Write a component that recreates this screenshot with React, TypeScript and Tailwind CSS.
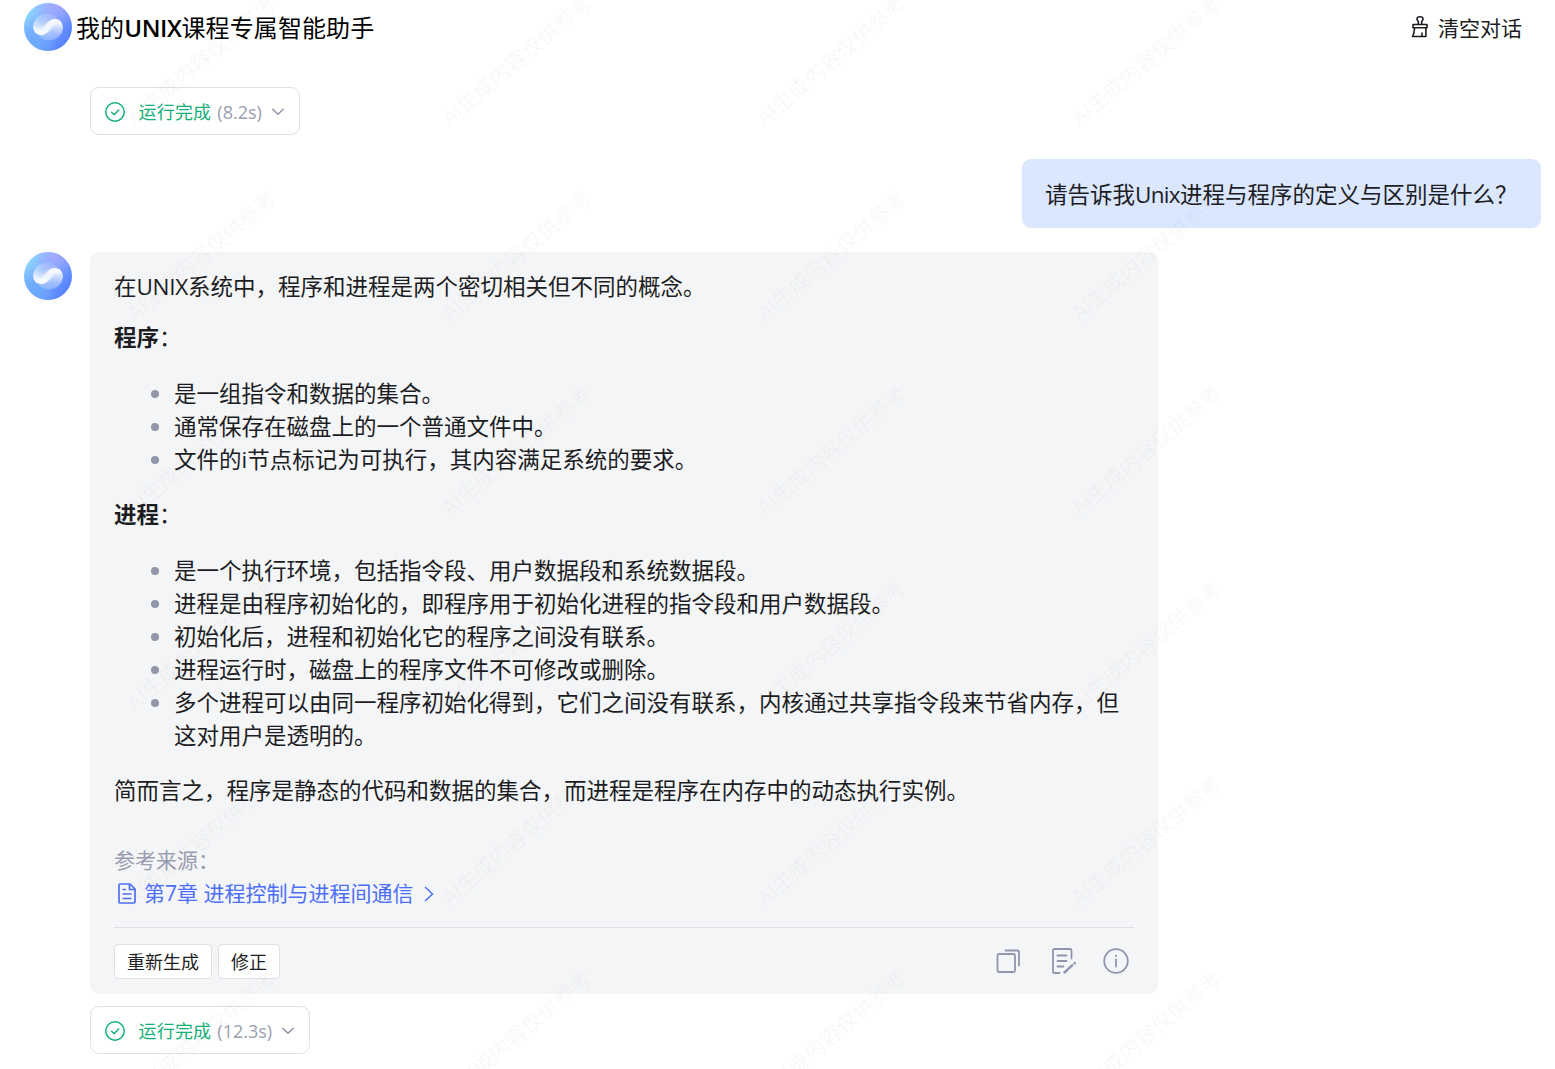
import React from "react";

const programPoints = [
  "是一组指令和数据的集合。",
  "通常保存在磁盘上的一个普通文件中。",
  "文件的i节点标记为可执行，其内容满足系统的要求。",
];

const processPoints = [
  "是一个执行环境，包括指令段、用户数据段和系统数据段。",
  "进程是由程序初始化的，即程序用于初始化进程的指令段和用户数据段。",
  "初始化后，进程和初始化它的程序之间没有联系。",
  "进程运行时，磁盘上的程序文件不可修改或删除。",
  "多个进程可以由同一程序初始化得到，它们之间没有联系，内核通过共享指令段来节省内存，但这对用户是透明的。",
];

function Avatar({ id }: { id: string }) {
  return (
    <svg viewBox="0 0 48 48" className="size-12 shrink-0">
      <defs>
        <linearGradient id={id + "-bg"} x1="0.05" y1="0.15" x2="0.9" y2="0.8">
          <stop offset="0" stopColor="#8fdcff" />
          <stop offset="0.45" stopColor="#7ea9ff" />
          <stop offset="1" stopColor="#5580ff" />
        </linearGradient>
        <radialGradient id={id + "-tint"} cx="0.65" cy="0.05" r="0.5">
          <stop offset="0" stopColor="#b0a6ff" stopOpacity="0.75" />
          <stop offset="1" stopColor="#b0a6ff" stopOpacity="0" />
        </radialGradient>
        <radialGradient id={id + "-low"} cx="0.2" cy="0.8" r="0.5">
          <stop offset="0" stopColor="#6cabff" />
          <stop offset="1" stopColor="#6cabff" stopOpacity="0" />
        </radialGradient>
        <linearGradient id={id + "-a"} x1="0.65" y1="0" x2="0.35" y2="1">
          <stop offset="0" stopColor="#fff" stopOpacity="0.12" />
          <stop offset="0.4" stopColor="#fff" stopOpacity="0.35" />
          <stop offset="0.85" stopColor="#fff" stopOpacity="0.9" />
        </linearGradient>
        <linearGradient id={id + "-b"} x1="0.65" y1="0" x2="0.35" y2="1">
          <stop offset="0.1" stopColor="#fff" stopOpacity="0.9" />
          <stop offset="0.6" stopColor="#fff" stopOpacity="0.4" />
          <stop offset="1" stopColor="#fff" stopOpacity="0.22" />
        </linearGradient>
      </defs>
      <circle cx="24" cy="24" r="24" fill={`url(#${id}-bg)`} />
      <circle cx="24" cy="24" r="24" fill={`url(#${id}-low)`} />
      <circle cx="24" cy="24" r="24" fill={`url(#${id}-tint)`} />
      <path d="M9 23A14 14 0 0 1 33 15C28 21 25 32 17 32C12 32 9 28 9 23Z" fill={`url(#${id}-a)`} />
      <path d="M39 25A14 14 0 0 1 15 33C20 27 23 16 31 16C36 16 39 20 39 25Z" fill={`url(#${id}-b)`} />
      <path d="M10 27C14 30 17 26 20 22C23 18 27 16 31 16C35 16 37 18 38 21C34 19 31 22 28 26C25 30 21 32 17 32C13.500 32 11 30 10 27Z" fill="#fff" fillOpacity="0.4" />
    </svg>
  );
}

function RunStatus({ time, className }: { time: string; className: string }) {
  return (
    <div className={`ml-[90px] flex h-12 items-center rounded-[9px] border border-[#dfe0e8] pt-px pl-[14px] text-[18px] ${className}`}>
      <svg viewBox="0 0 20 20" className="size-5" fill="none" stroke="#12b077" strokeWidth="1.500" strokeLinecap="round" strokeLinejoin="round">
        <circle cx="10" cy="10" r="9.200" />
        <path d="M6.600 10.300 9.100 12.800 13.700 8" />
      </svg>
      <span className="ml-[13.5px] pt-px tracking-[0.2px] text-[#12b077]">运行完成</span>
      <span className="ml-[6px] pt-px text-[#9a9eb0]">({time})</span>
      <svg viewBox="0 0 12 8" className="ml-[10px] h-2 w-3" fill="none" stroke="#8f93a6" strokeWidth="1.400" strokeLinecap="round" strokeLinejoin="round">
        <path d="M0.800 1.200 6 6.200 11.200 1.200" />
      </svg>
    </div>
  );
}

function Points({ items }: { items: string[] }) {
  return (
    <ul>
      {items.map((t) => (
        <li key={t} className="flex">
          <span className="mt-[13px] mr-[15px] ml-[37px] size-2 shrink-0 rounded-full bg-[#9196a8]" />
          <span>{t}</span>
        </li>
      ))}
    </ul>
  );
}

const marks = [-37, 158, 353, 548, 743, 938].flatMap((y) => [122, 437, 752, 1067].map((x) => [x, y]));

function Watermark() {
  return (
    <div className="pointer-events-none absolute inset-0 overflow-hidden">
      {marks.map(([x, y]) => (
        <div key={x + "-" + y} className="absolute flex h-[195px] w-[160px] items-center justify-center" style={{ left: x, top: y }}>
          <span className="-rotate-[40deg] text-[21px] leading-none whitespace-nowrap text-[#1c1d23]/4">AI生成内容仅供参考</span>
        </div>
      ))}
    </div>
  );
}

export default function App() {
  return (
    <div lang="zh-CN" className="relative h-[1069px] w-[1555px] overflow-hidden bg-white font-['Open_Sans','Noto_Sans_CJK_SC',sans-serif] text-[#1c1d23]">
      <header className="flex h-[54px] items-center pr-[33px] pl-6">
        <Avatar id="head" />
        <h1 className="ml-1 pt-0.5 text-[24px] leading-9 tracking-[0.1px] text-black">
          我的<span className="font-semibold tracking-[-0.4px]">UNIX</span>课程专属智能助手
        </h1>
        <button className="ml-auto flex items-center pt-px text-[21px] leading-8">
          <svg viewBox="0 0 18 22" className="mr-[9px] mb-px h-[22px] w-[18px]" fill="none" stroke="#1c1d23" strokeWidth="1.600" strokeLinejoin="round">
            <path d="M7.300 8V5.500C6.300 4.500 6 3.800 6 3a3 2.200 0 0 1 6 0c0 .8-.3 1.500-1.300 2.500V8" />
            <path d="M2 8.500h14v3.200H2zM3.600 12 2.800 17.500 1.500 20.500h13.400V12M11 20v-3.500" />
          </svg>
          <span className="pt-px">清空对话</span>
        </button>
      </header>

      <main className="flex flex-col items-start pt-[33px]">
        <RunStatus time="8.2s" className="w-[210px]" />

        <div className="mt-6 mr-[14px] flex h-[69px] w-[519px] items-center self-end rounded-[9px] bg-[#dbe6ff] pt-px pl-[23px] text-[22.500px] leading-[33px]">
          请告诉我<span className="tracking-[-0.7px]">Unix</span>进程与程序的定义与区别是什么？
        </div>

        <section className="mt-6 flex items-start pl-6">
          <Avatar id="reply" />
          <article className="ml-[18px] h-[742px] w-[1068px] rounded-[9px] bg-[#f4f5f7] px-6 pt-[18px] text-[22.500px] leading-[33px]">
            <p>在<span className="tracking-[-0.3px]">UNIX</span>系统中，程序和进程是两个密切相关但不同的概念。</p>
            <p className="mt-[18px] mb-[23px]"><b className="font-bold">程序</b>：</p>
            <Points items={programPoints} />
            <p className="mt-[22px] mb-[23px]"><b className="font-bold">进程</b>：</p>
            <Points items={processPoints} />
            <p className="mt-[22px]">简而言之，程序是静态的代码和数据的集合，而进程是程序在内存中的动态执行实例。</p>

            <div className="mt-[37px] text-[21px] leading-[33px]">
              <p className="text-[#9a9db0]">参考来源：</p>
              <a className="flex items-center pl-1 text-[#4d6ff7]">
                <svg viewBox="0 0 18 21" className="mr-2 h-[21px] w-[18px]" fill="none" stroke="currentColor" strokeWidth="1.700" strokeLinejoin="round">
                  <path d="M1 2.200Q1 1 2.200 1H12l5 5v12.800q0 1.200-1.200 1.200H2.200Q1 20 1 18.800ZM11.500 1v5.500H17M4.500 6.500H8M4.500 11h9M4.500 15.500h9" />
                </svg>
                第7章 进程控制与进程间通信
                <svg viewBox="0 0 10 16" className="ml-[11px] h-4 w-[10px]" fill="none" stroke="currentColor" strokeWidth="1.500">
                  <path d="M1 1 8.500 8 1 15" />
                </svg>
              </a>
            </div>

            <footer className="mt-[17px] flex items-center border-t border-[#dfe0e6] pt-4 text-[18px] leading-none">
              <button className="h-[35px] w-[98px] rounded-[4px] border border-[#dfe0e8] bg-white">重新生成</button>
              <button className="ml-[6px] h-[35px] w-[62px] rounded-[4px] border border-[#dfe0e8] bg-white">修正</button>
              <div className="mr-[5px] mb-px ml-auto flex items-center text-[#9196ac]">
                <svg viewBox="0 0 26 26" className="mr-[29px] size-[26px]" fill="none" stroke="currentColor" strokeWidth="1.800" strokeLinejoin="round" strokeLinecap="round">
                  <rect x="2.500" y="6" width="17.500" height="18" rx="1.500" />
                  <path d="M10.500 2.500H22.500q1.500 0 1.500 1.500V17.500" />
                </svg>
                <svg viewBox="0 0 26 26" className="mr-[27px] size-[26px]" fill="none" stroke="currentColor" strokeWidth="1.800" strokeLinejoin="round" strokeLinecap="round">
                  <path d="M9.500 25H4.500Q3 25 3 23.500V2.500Q3 1 4.500 1H20q1.500 0 1.500 1.500V10.500M7.500 7.500h9M7.500 13h9M7.500 18.500h6" />
                  <path d="M14.500 24.500 22.300 17.200M24.600 15.300 24.900 15" strokeWidth="2.400" />
                </svg>
                <svg viewBox="0 0 26 26" className="size-[26px]" fill="none" stroke="currentColor" strokeWidth="1.800" strokeLinecap="round">
                  <circle cx="13" cy="13" r="11.800" />
                  <path d="M13 11.500v7" />
                  <circle cx="13" cy="7.800" r="1.100" fill="currentColor" stroke="none" />
                </svg>
              </div>
            </footer>
          </article>
        </section>

        <RunStatus time="12.3s" className="mt-3 w-[220px]" />
      </main>
      <Watermark />
    </div>
  );
}
